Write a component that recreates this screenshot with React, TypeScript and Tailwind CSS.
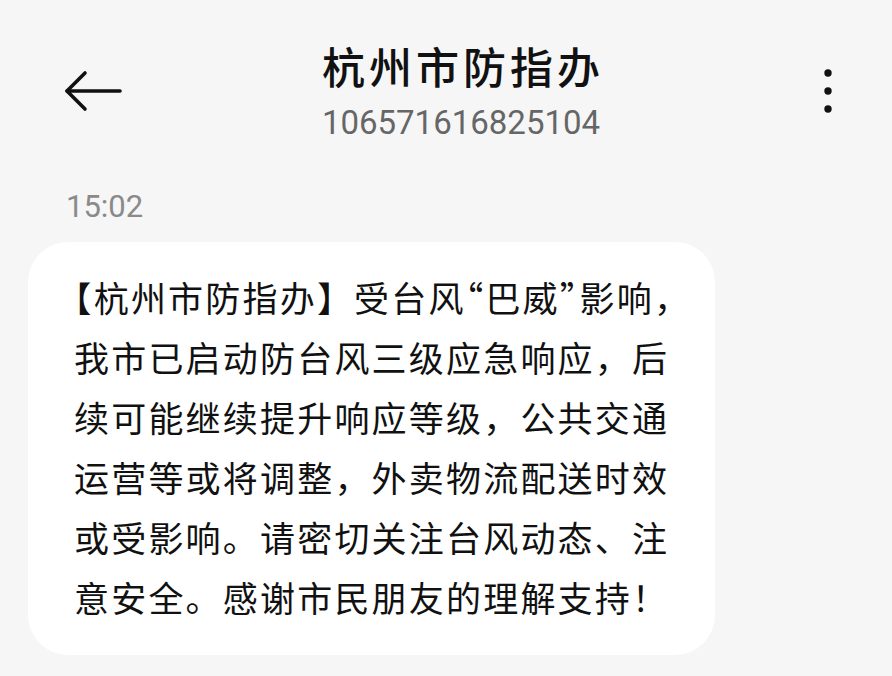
const lines = [
  '我市已启动防台风三级应急响应，后',
  '续可能继续提升响应等级，公共交通',
  '运营等或将调整，外卖物流配送时效',
  '或受影响。请密切关注台风动态、注',
  '意安全。感谢市民朋友的理解支持！',
]

function BackArrow() {
  return (
    <svg width="60" height="44" viewBox="0 0 60 44" fill="none" stroke="#111" strokeWidth="3.6" strokeLinecap="round" strokeLinejoin="round">
      <path d="M5 22H58" />
      <path d="M23 4L5 22L23 40" />
    </svg>
  )
}

function MoreDots() {
  return (
    <svg width="12" height="48" viewBox="0 0 12 48" fill="#111">
      <circle cx="6" cy="6" r="3.7" />
      <circle cx="6" cy="24" r="3.7" />
      <circle cx="6" cy="42" r="3.7" />
    </svg>
  )
}

export default function App() {
  return (
    <div className="h-[676px] w-[892px] overflow-hidden bg-[#f6f6f6] font-['Noto_Sans_CJK_SC',sans-serif] text-[#111]">
      {/* top bar */}
      <header className="flex items-start pt-[40px]">
        <div className="w-[130px] shrink-0 pl-[62px] pt-[29px]">
          <BackArrow />
        </div>
        <div className="flex flex-1 flex-col items-center">
          <h1 className="pl-[4px] text-[43px] leading-[50px] font-medium tracking-[4px]">杭州市防指办</h1>
          <p className="mt-[13px] font-['Roboto',sans-serif] text-[33px] leading-[40px] text-[#666]">106571616825104</p>
        </div>
        <div className="w-[100px] shrink-0 pl-[30px] pt-[27px]">
          <MoreDots />
        </div>
      </header>

      <div className="mt-[44px] pl-[66px] font-['Roboto',sans-serif] text-[31px] leading-[40px] text-[#8a8a8a]">15:02</div>

      {/* message bubble */}
      <div className="ml-[28px] mt-[15px] w-[687px] rounded-[40px] bg-white pt-[25px] pb-[28px] pl-[46px]">
        <div className="text-[35px] leading-[60px] tracking-[2.2px]">
          <div>
            <span className="[font-feature-settings:'halt']">【</span>
            杭州市防指办】受台风
            <span className="[font-feature-settings:'halt']">“</span>
            巴威
            <span className="[font-feature-settings:'halt']">”</span>
            影响，
          </div>
          {lines.map((l) => (
            <div key={l}>{l}</div>
          ))}
        </div>
      </div>
    </div>
  )
}
